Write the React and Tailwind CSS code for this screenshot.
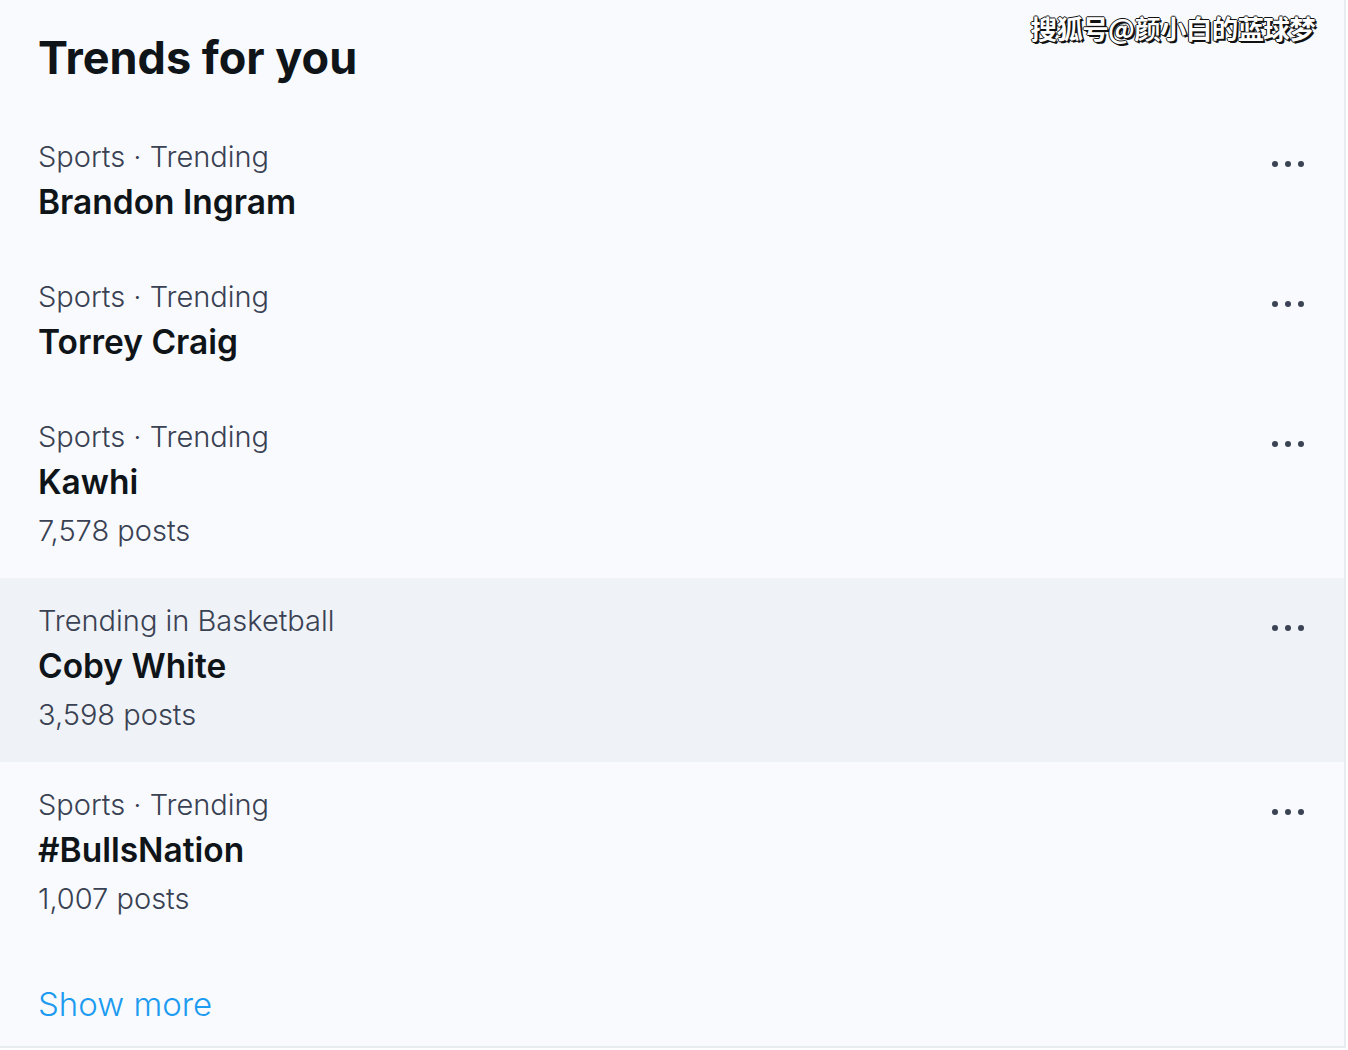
const trends = [
  { category: 'Sports · Trending', name: 'Brandon Ingram' },
  { category: 'Sports · Trending', name: 'Torrey Craig' },
  { category: 'Sports · Trending', name: 'Kawhi', posts: '7,578 posts' },
  { category: 'Trending in Basketball', name: 'Coby White', posts: '3,598 posts', active: true },
  { category: 'Sports · Trending', name: '#BullsNation', posts: '1,007 posts' },
]

function Dots() {
  return (
    <div className="self-start flex items-center gap-[7px] pt-[24px]">
      <span className="w-[6px] h-[6px] rounded-full bg-[#3b4354]" />
      <span className="w-[6px] h-[6px] rounded-full bg-[#3b4354]" />
      <span className="w-[6px] h-[6px] rounded-full bg-[#3b4354]" />
    </div>
  )
}

function TrendRow({ trend }) {
  return (
    <div
      className={`flex justify-between pl-[38px] pr-[40px] pt-[23px] ${
        trend.posts ? 'pb-[23px]' : 'pb-[27px]'
      } ${trend.active ? 'bg-[#eff2f6]' : ''}`}
    >
      <div>
        <p className="text-[29px] leading-[40px] text-[#394153] font-light">
          {trend.category}
        </p>
        <p className="text-[33.5px] leading-[50px] font-semibold text-[#0f1419]">
          {trend.name}
        </p>
        {trend.posts && (
          <p className="text-[29px] leading-[48px] text-[#394153] font-light">
            {trend.posts}
          </p>
        )}
      </div>
      <Dots />
    </div>
  )
}

export default function App() {
  return (
    <div className="w-[1348px] h-[1050px] bg-white overflow-hidden" style={{ fontFamily: 'Inter, "Noto Sans", sans-serif' }}>
      <div className="relative w-[1346px] h-[1048px] bg-[#f8fafd] border-r-2 border-b-2 border-[#e9ecef]">
        {/* watermark */}
        <div
          className="absolute top-[8px] right-[29px] text-[26.5px] font-bold text-white tracking-tight"
          style={{
            fontFamily: '"Noto Sans CJK SC", sans-serif',
            textShadow: '-1px 0 #111, 1px 0 #111, 0 1px #111, 0 -1px #111, 2px 2px #111',
          }}
        >
          搜狐号@颜小白的蓝球梦
        </div>

        {/* Header */}
        <div className="pl-[38px] pt-[30px] pb-[28px]">
          <h1 className="text-[45px] leading-[56px] font-bold text-[#0f1419]">
            Trends for you
          </h1>
        </div>

        {/* Trends */}
        <div className="flex flex-col">
          {trends.map((t, i) => (
            <TrendRow key={i} trend={t} />
          ))}
        </div>

        {/* Show more */}
        <div className="pl-[38px] pt-[36px]">
          <span className="text-[33px] leading-[44px] text-[#1d9bf0] font-light">
            Show more
          </span>
        </div>
      </div>
    </div>
  )
}
